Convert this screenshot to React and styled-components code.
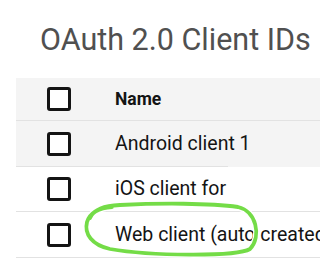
import React from "react";
import styled, { createGlobalStyle } from "styled-components";

const Global = createGlobalStyle`
  html, body { margin: 0; padding: 0; background: #ffffff; }
  body { font-family: Roboto, "Liberation Sans", sans-serif; overflow: hidden; }
`;

const Page = styled.div`
  position: relative;
  width: 320px;
  height: 264px;
  overflow: hidden;
  background: #fff;
`;

const Title = styled.h1`
  margin: 0;
  padding: 22px 0 0 40px;
  font-size: 30.5px;
  line-height: 36px;
  font-weight: 400;
  color: #505050;
  white-space: nowrap;
`;

const Table = styled.div`
  margin: 20px 0 0 16px;
  display: flex;
  flex-direction: column;
`;

const Row = styled.div`
  position: relative;
  display: flex;
  align-items: center;
  height: ${(p) => p.$h}px;
  background: ${(p) => (p.$shaded ? "#f4f4f4" : "#ffffff")};
  border-bottom: 1px solid ${(p) => (p.$shortLine ? "transparent" : "#e2e2e2")};
  &::after {
    content: "";
    display: ${(p) => (p.$shortLine ? "block" : "none")};
    position: absolute;
    left: 0;
    bottom: -1px;
    width: 212px;
    height: 1px;
    background: #e2e2e2;
  }
`;

const BoxCell = styled.div`
  width: 99px;
  padding-left: 31px;
  box-sizing: border-box;
  flex: none;
  display: flex;
  align-items: center;
`;

const Checkbox = styled.span`
  display: block;
  width: 24px;
  height: 24px;
  box-sizing: border-box;
  border: 3px solid #141414;
  border-radius: 3px;
  background: #fff;
`;

const Cell = styled.div`
  flex: 1;
  min-width: 0;
  white-space: nowrap;
  overflow: hidden;
  color: #141414;
  font-size: ${(p) => (p.$head ? "17.5px" : "19.5px")};
  font-weight: ${(p) => (p.$head ? 700 : 400)};
  line-height: 24px;
`;

const Scribble = styled.svg`
  position: absolute;
  left: 0;
  top: 0;
  width: 320px;
  height: 264px;
  pointer-events: none;
`;

const rows = [
  { name: "Name", head: true, h: 42, shaded: true },
  { name: "Android client 1", h: 45, shaded: true, shortLine: true },
  { name: "iOS client for", h: 44 },
  { name: "Web client (auto created by Google Service)", h: 45 },
];

const loop =
  "M 90 218 C 94 209, 104 206, 120 205 C 160 203, 210 203, 238 207 C 256 211, 262 236, 250 249 C 236 257, 150 256, 110 249 C 92 245, 84 234, 87 222 C 90 213, 98 208, 112 207";

export default function App() {
  return (
    <Page>
      <Global />
      <Title>OAuth 2.0 Client IDs</Title>
      <Table>
        {rows.map((r) => (
          <Row key={r.name} $h={r.h} $shaded={r.shaded} $shortLine={r.shortLine}>
            <BoxCell>
              <Checkbox />
            </BoxCell>
            <Cell $head={r.head}>{r.name}</Cell>
          </Row>
        ))}
      </Table>
      <Scribble viewBox="0 0 320 264">
        <path d={loop} fill="none" stroke="#ffffff" strokeWidth="6.5" strokeLinecap="round" />
        <path d={loop} fill="none" stroke="#74dc47" strokeWidth="3.8" strokeLinecap="round" />
      </Scribble>
    </Page>
  );
}
